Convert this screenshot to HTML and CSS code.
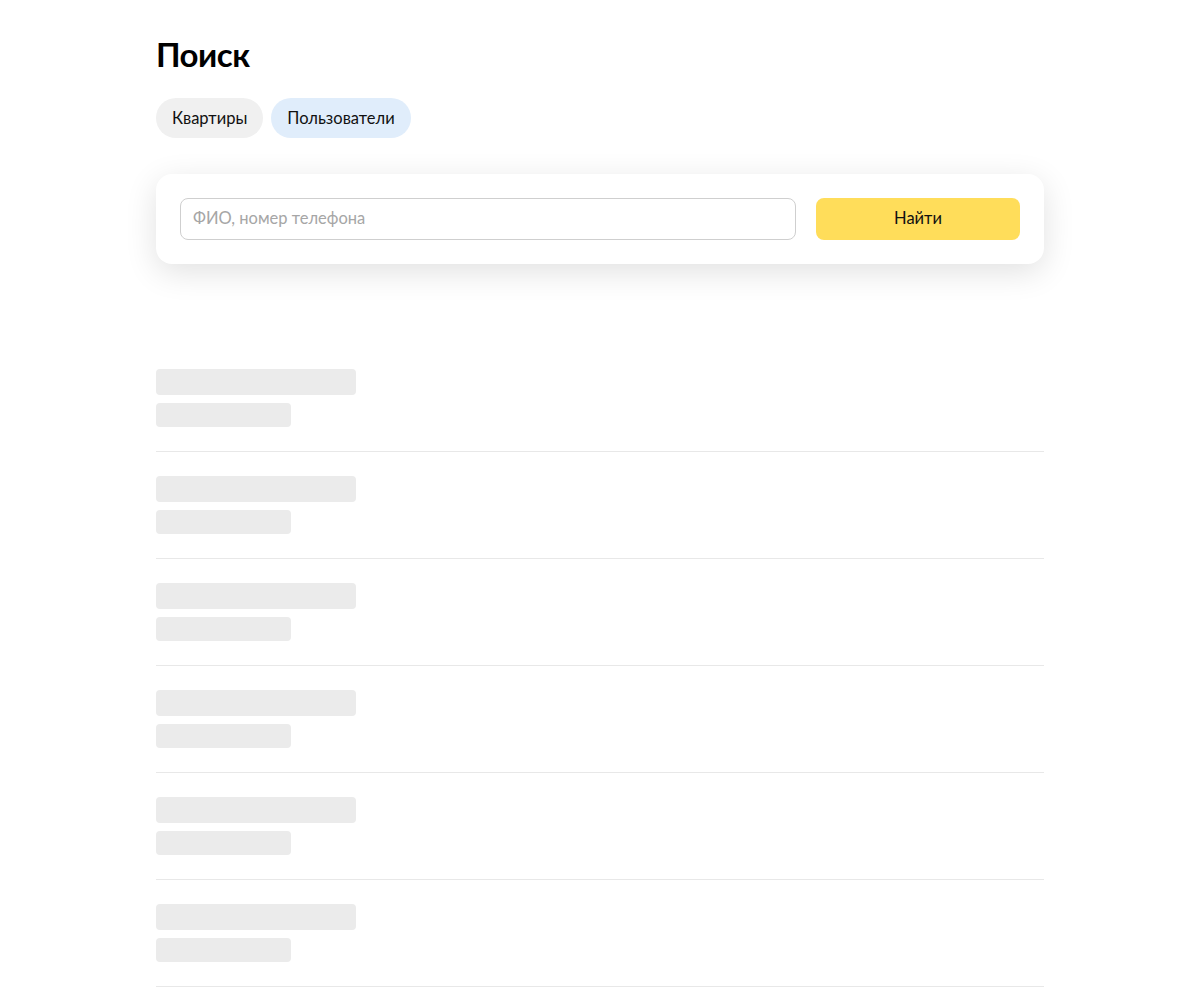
FILE: index.html
```html
<!DOCTYPE html>
<html lang="ru">
<head>
<meta charset="utf-8">
<title>Поиск</title>
<link rel="stylesheet" href="styles.css">
</head>
<body>
<main class="page">
  <h1 class="title">Поиск</h1>
  <div class="tabs">
    <button class="tab">Квартиры</button>
    <button class="tab tab-active">Пользователи</button>
  </div>
  <form class="search-card">
    <input class="search-input" type="text" placeholder="ФИО, номер телефона">
    <button class="search-btn" type="button">Найти</button>
  </form>
  <ul class="results">
    <li class="row"><div class="sk sk-1"></div><div class="sk sk-2"></div></li>
    <li class="row"><div class="sk sk-1"></div><div class="sk sk-2"></div></li>
    <li class="row"><div class="sk sk-1"></div><div class="sk sk-2"></div></li>
    <li class="row"><div class="sk sk-1"></div><div class="sk sk-2"></div></li>
    <li class="row"><div class="sk sk-1"></div><div class="sk sk-2"></div></li>
    <li class="row"><div class="sk sk-1"></div><div class="sk sk-2"></div></li>
  </ul>
</main>
</body>
</html>
```
FILE: styles.css
```css
* { box-sizing: border-box; }
html, body { margin: 0; padding: 0; background: #fff; }
body {
  font-family: Lato, "Noto Sans", "Liberation Sans", sans-serif;
  color: #000;
}
.page {
  width: 888px;
  margin: 0 auto;
  padding-top: 34px;
}
.title {
  margin: 0;
  font-size: 33px;
  line-height: 40px;
  font-weight: 700;
  letter-spacing: -0.5px;
}
.tabs {
  display: flex;
  gap: 8px;
  margin-top: 24px;
}
.tab {
  height: 40px;
  padding: 0 16px;
  border: none;
  border-radius: 20px;
  background: #f0f0f0;
  font-family: inherit;
  font-size: 16.5px;
  color: #111;
  cursor: pointer;
}
.tab-active { background: #e0edfb; }
.search-card {
  margin-top: 36px;
  display: flex;
  gap: 20px;
  padding: 24px;
  border-radius: 16px;
  background: #fff;
  box-shadow: 0 8px 32px rgba(0,0,0,0.12);
}
.search-input {
  flex: 1;
  height: 42px;
  padding: 0 12px 2px;
  border: 1px solid #cfcfcf;
  border-radius: 8px;
  font-family: inherit;
  font-size: 16.5px;
  color: #000;
  outline: none;
}
.search-input::placeholder { color: #a6a6a6; }
.search-btn {
  width: 204px;
  height: 42px;
  padding: 0 0 2px;
  border: none;
  border-radius: 8px;
  background: #ffdd5a;
  font-family: inherit;
  font-size: 16.5px;
  color: #111;
  cursor: pointer;
}
.results {
  list-style: none;
  margin: 81px 0 0;
  padding: 0;
}
.row {
  display: flex;
  flex-direction: column;
  gap: 8px;
  padding: 24px 0;
  border-bottom: 1px solid #e8e8e8;
}
.sk {
  background: #ebebeb;
  border-radius: 4px;
}
.sk-1 { width: 200px; height: 26px; }
.sk-2 { width: 135px; height: 24px; }
```
